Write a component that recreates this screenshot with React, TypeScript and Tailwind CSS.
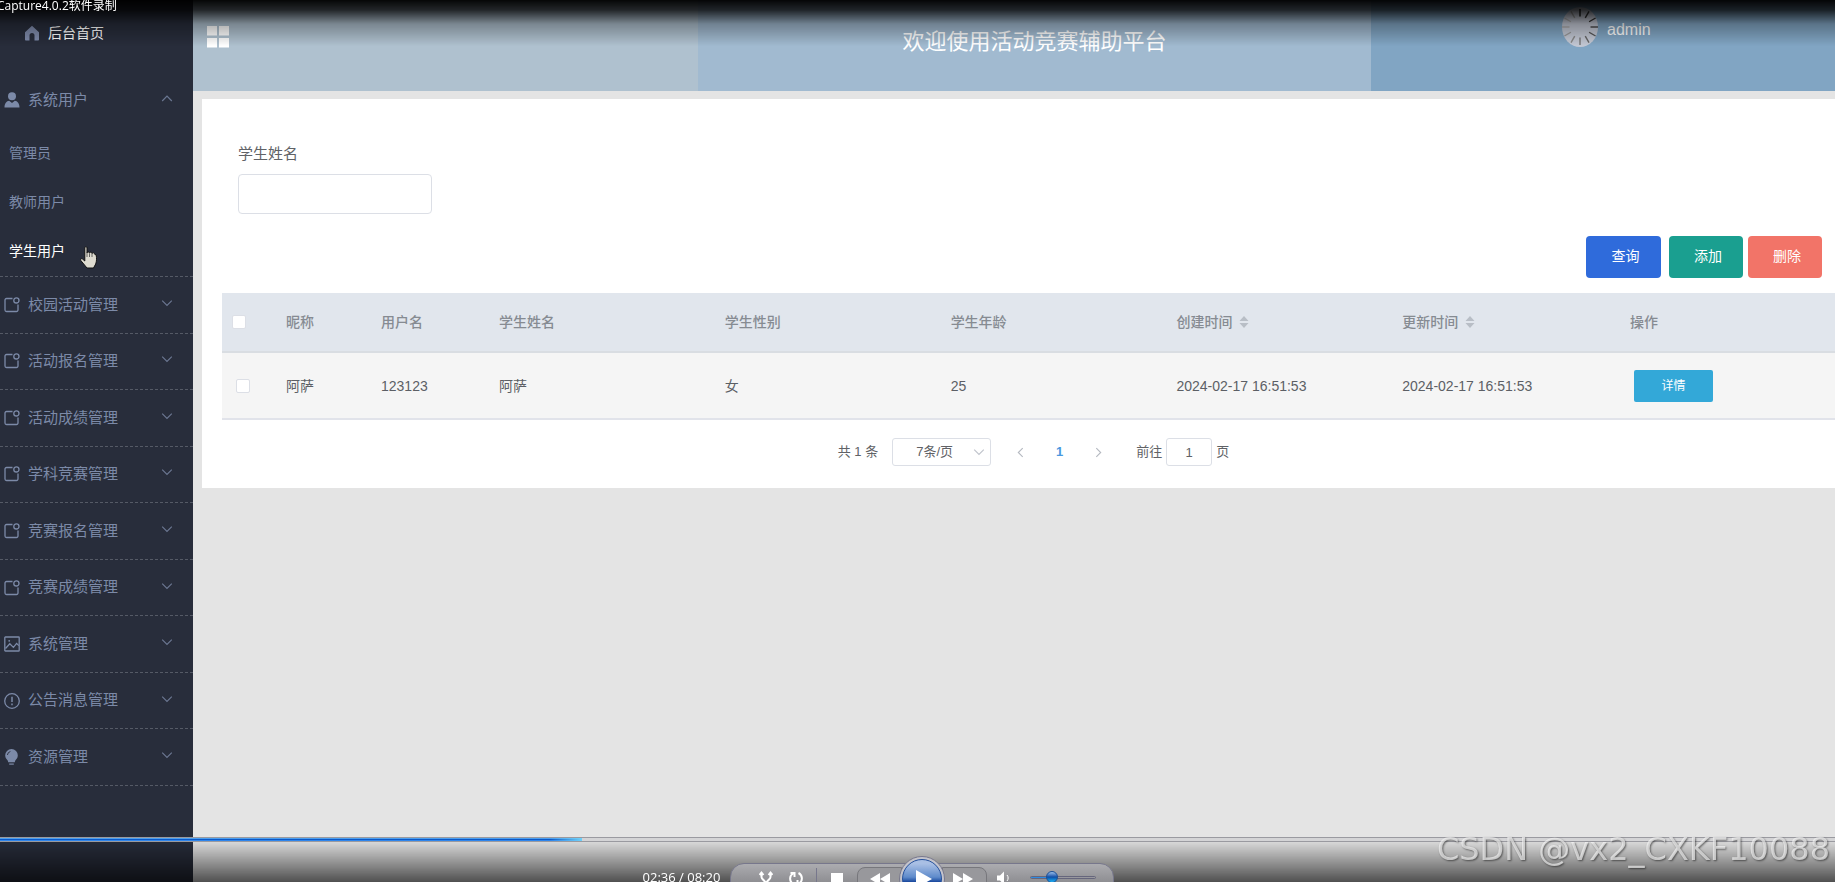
import React from 'react';

const menus = [
  { label: '校园活动管理', icon: 'tip' },
  { label: '活动报名管理', icon: 'tip' },
  { label: '活动成绩管理', icon: 'tip' },
  { label: '学科竞赛管理', icon: 'tip' },
  { label: '竞赛报名管理', icon: 'tip' },
  { label: '竞赛成绩管理', icon: 'tip' },
  { label: '系统管理', icon: 'picture' },
  { label: '公告消息管理', icon: 'warning' },
  { label: '资源管理', icon: 'bulb' },
];

const rows = [
  {
    nickname: '阿萨',
    username: '123123',
    name: '阿萨',
    gender: '女',
    age: '25',
    created: '2024-02-17 16:51:53',
    updated: '2024-02-17 16:51:53',
  },
];

function MenuIcon({ name }: { name: string }) {
  return (
    <svg className="h-4 w-4 shrink-0" viewBox="0 0 16 16" fill="none" stroke="currentColor" strokeWidth="1.3">
      {name === 'tip' && (
        <>
          <path d="M8.500 1.500H2.500A1.500 1.500 0 0 0 1 3v10a1.500 1.500 0 0 0 1.500 1.500h10A1.500 1.500 0 0 0 14 13V7.500" />
          <circle cx="12.400" cy="3.400" r="2.600" />
        </>
      )}
      {name === 'picture' && (
        <>
          <rect x="0.8" y="1" width="14.400" height="14" rx="0.6" />
          <path d="M1.500 12.500L5.800 7.800l3.600 3.600 3.200-4 2.200 2.200" />
          <circle cx="5.200" cy="4.800" r="0.900" fill="currentColor" stroke="none" />
        </>
      )}
      {name === 'warning' && (
        <>
          <circle cx="8" cy="8" r="7.300" />
          <path d="M8 3.800v5.200M8 10.500v1.700" strokeWidth="1.500" />
        </>
      )}
      {name === 'bulb' && (
        <g fill="currentColor" stroke="none">
          <path d="M7.500 0a6.300 6.300 0 0 1 6.300 6.500c0 2.600-1.600 3.700-2.500 5-.4.700-.4 1.300-.4 1.800H4.100c0-.5 0-1.100-.4-1.800-.9-1.300-2.500-2.400-2.500-5A6.300 6.300 0 0 1 7.500 0z" />
          <path d="M5.200 14.500h4.600v1.200H5.200z" />
          <path d="M3.400 6a4 4 0 0 1 3-3.500" fill="none" stroke="#282d3b" strokeWidth="0.900" />
        </g>
      )}
      {name === 'user' && (
        <g fill="currentColor" stroke="none">
          <circle cx="8" cy="4.300" r="4" />
          <path d="M.5 15.500c0-4 2-6.500 4.700-6.700L8 11l2.800-2.200c2.700.2 4.700 2.700 4.700 6.700z" />
        </g>
      )}
      {name === 'home' && (
        <path d="M8 .8L1 7.200v7.500c0 .5.300.8.800.8h3.700v-5a2.500 2.500 0 0 1 5 0v5h3.700c.5 0 .8-.3.800-.8V7.200z" fill="currentColor" stroke="none" />
      )}
    </svg>
  );
}

function Chevron({ d, className }: { d: string; className: string }) {
  return (
    <svg className={className} viewBox="0 0 10 10" fill="none" stroke="currentColor">
      <path d={d} />
    </svg>
  );
}

function Sidebar() {
  return (
    <nav className="w-[193px] shrink-0 bg-[#282d3b] text-[15px] text-[#7c8aa8]">
      <a href="#home" className="mt-[5px] flex h-14 items-center gap-2 pl-6 text-sm text-white">
        <span className="text-[#7f8bab]">
          <MenuIcon name="home" />
        </span>
        后台首页
      </a>
      <button className="mt-[11px] flex h-14 w-full items-center gap-2 pr-5 pl-1">
        <MenuIcon name="user" />
        <span>系统用户</span>
        <Chevron className="mb-1 ml-auto h-3 w-3 opacity-80" d="M1 7.500l4-4 4 4" />
      </button>
      <ul className="border-b border-dashed border-[#555a66] pb-px text-sm">
        <li>
          <a href="#admins" className="flex h-[49px] items-center pl-[9px]">管理员</a>
        </li>
        <li>
          <a href="#teachers" className="flex h-[49px] items-center pl-[9px]">教师用户</a>
        </li>
        <li>
          <a href="#students" className="relative flex h-[49px] items-center pl-[9px] text-white">
            学生用户
            <svg className="absolute top-5 left-20 h-[23px] w-[17px]" viewBox="0 0 17 23">
              <path
                d="M4.800 1.800c0-1.500 2.200-1.500 2.200 0V7c0-1.400 2.500-1.400 2.500.2 0-1.400 2.600-1.400 2.600.4 0-1.300 2.500-1.200 2.500.6l1.600.8c.5 3.500.5 6-.5 9L13.500 22H7L4.500 19 .8 14.500c-.8-1.400.6-2.400 1.800-1.400L4.800 15z"
                fill="#dedbd0"
                stroke="#111"
              />
              <path d="M7 7v4M9.500 7.500v3.500M12 8v3" stroke="#444" strokeWidth="0.800" />
            </svg>
          </a>
        </li>
      </ul>
      <ul className="grid h-[509px] auto-rows-fr">
        {menus.map((m) => (
          <li key={m.label} className="border-b border-dashed border-[#555a66]">
            <button className="flex h-full w-full items-center gap-2 pr-5 pl-1">
              <MenuIcon name={m.icon} />
              <span>{m.label}</span>
              <Chevron className="mb-1 ml-auto h-3 w-3 opacity-80" d="M1 3l4 4 4-4" />
            </button>
          </li>
        ))}
      </ul>
    </nav>
  );
}

const spokes = ['#1a1a1a', '#333', '#333', '#444', '#555', '#666', '#777', '#888', '#999', '#aaa', '#aaa', '#999'];

function Header() {
  return (
    <header className="grid h-[91px] grid-cols-[505fr_673fr_464fr]">
      <div className="bg-[#afc1cf] pt-[26px] pl-[14px]">
        <button className="block" aria-label="折叠菜单">
          <svg className="h-[22px] w-[22px]" viewBox="0 0 22 22" fill="#fff">
            <path d="M0 0h10v9.500H0zM12 0h10v9.500H12zM0 12h10v9.500H0zM12 12h10v9.500H12z" />
          </svg>
        </button>
      </div>
      <div className="flex items-center justify-center bg-[#a1bad0] pb-[9px]">
        <h1 className="text-[22px] text-white">欢迎使用活动竞赛辅助平台</h1>
      </div>
      <div className="bg-[#81a5c3] pt-[7px] pl-[191px]">
        <div className="flex h-10 items-center gap-[9px]">
          <svg className="h-10 w-9" viewBox="0 0 36 40">
            <ellipse cx="18" cy="20" rx="18" ry="20" fill="#c3c8d4" />
            {spokes.map((c, i) => (
              <path key={i} d="M18 9.500V2" stroke={c} strokeWidth="1.400" transform={`rotate(${i * 30} 18 20)`} />
            ))}
          </svg>
          <span className="pt-[6px] text-base text-white">admin</span>
        </div>
      </div>
    </header>
  );
}

function SortIcon() {
  return (
    <svg className="h-3 w-[10px]" viewBox="0 0 10 12" fill="#b8bec6">
      <path d="M5 0l4.500 5h-9zM5 12L.5 7h9z" />
    </svg>
  );
}

function StudentTable() {
  return (
    <table className="w-full table-fixed border-collapse text-left text-sm">
      <colgroup>
        <col className="w-[54px]" />
        <col className="w-[95px]" />
        <col className="w-[118px]" />
        <col className="w-[14%]" />
        <col className="w-[14%]" />
        <col className="w-[14%]" />
        <col className="w-[14%]" />
        <col className="w-[14%]" />
        <col />
      </colgroup>
      <thead>
        <tr className="h-[59px] border-b-2 border-[#d9dde2] bg-[#e1e6ed] text-[#868b92]">
          <th className="pl-[10px]">
            <input type="checkbox" aria-label="全选" className="block h-[14px] w-[14px] appearance-none rounded-xs border border-[#dcdfe6] bg-white" />
          </th>
          <th className="pl-[10px] font-medium">昵称</th>
          <th className="pl-[10px] font-medium">用户名</th>
          <th className="pl-[10px] font-medium">学生姓名</th>
          <th className="pl-[10px] font-medium">学生性别</th>
          <th className="pl-[10px] font-medium">学生年龄</th>
          <th className="pl-[10px] font-medium">
            <button className="flex items-center gap-[7px]">创建时间<SortIcon /></button>
          </th>
          <th className="pl-[10px] font-medium">
            <button className="flex items-center gap-[7px]">更新时间<SortIcon /></button>
          </th>
          <th className="pl-3 font-medium">操作</th>
        </tr>
      </thead>
      <tbody>
        {rows.map((r) => (
          <tr key={r.username} className="h-[67px] border-b-2 border-[#e1e3ea] bg-[#f5f5f5] text-[#5c5f65]">
            <td className="pl-[14px]">
              <input type="checkbox" aria-label={`选择 ${r.nickname}`} className="block h-[14px] w-[14px] appearance-none rounded-xs border border-[#dcdfe6] bg-white" />
            </td>
            <td className="pl-[10px]">{r.nickname}</td>
            <td className="pl-[10px]">{r.username}</td>
            <td className="pl-[10px]">{r.name}</td>
            <td className="pl-[10px]">{r.gender}</td>
            <td className="pl-[10px]">{r.age}</td>
            <td className="pl-[10px]">{r.created}</td>
            <td className="pl-[10px]">{r.updated}</td>
            <td className="pl-4">
              <button className="block h-8 w-[79px] rounded-xs bg-[#33a8d8] text-xs text-white">详情</button>
            </td>
          </tr>
        ))}
      </tbody>
    </table>
  );
}

function Pagination() {
  return (
    <div className="flex h-[64px] items-center justify-center pl-[10px] text-[13px] text-[#606266]">
      <span>共 1 条</span>
      <div className="relative ml-[14px]">
        <select aria-label="每页条数" className="block h-7 w-[99px] appearance-none rounded-[3px] border border-[#dcdfe6] bg-white pl-[23px]">
          <option>7条/页</option>
        </select>
        <Chevron className="pointer-events-none absolute top-2 right-[6px] h-3 w-3 text-[#c0c4cc]" d="M1 3l4 4 4-4" />
      </div>
      <button aria-label="上一页" className="ml-6 text-[#b4b8c0]">
        <Chevron className="h-[11px] w-[11px]" d="M7 1L3 5l4 4" />
      </button>
      <button className="mx-7 w-[11px] font-bold text-[#4a98e0]">1</button>
      <button aria-label="下一页" className="text-[#b4b8c0]">
        <Chevron className="h-[11px] w-[11px]" d="M3 1l4 4-4 4" />
      </button>
      <label className="ml-8 flex items-center gap-1">
        前往
        <input defaultValue="1" className="h-7 w-[46px] rounded-[3px] border border-[#dcdfe6] text-center" />
        页
      </label>
    </div>
  );
}

function Player() {
  return (
    <div className="fixed inset-x-0 bottom-0 h-[45px] overflow-hidden">
      <div className="h-[5px] border-y border-[#9a9aa0] bg-[#d4d4d6]">
        <div className="h-[3px] w-[31.7%] bg-linear-to-b from-[#6cc0ff] via-[#0a58c8] to-[#3f9cff]">
          <div className="ml-auto h-[3px] w-8 bg-linear-to-r from-transparent to-[#6fd0f8]"></div>
        </div>
      </div>
      <div className="flex h-10 justify-center bg-linear-to-b from-black/5 to-black/65 pr-[78px] text-white">
        <div className="mr-[10px] pt-[25px] text-[13px] leading-5 font-['Open_Sans',sans-serif]">02:36 / 08:20</div>
        <div className="mt-[21px] flex h-8 w-[384px] rounded-t-[14px] border border-[#77778c] bg-linear-to-b from-[#acacb0] to-[#7b7b7f]">
          <button aria-label="随机" className="ml-7 h-7 w-[14px]">
            <svg className="h-4 w-[14px]" viewBox="0 0 14 16" fill="none" stroke="#fff" strokeWidth="2">
              <path d="M2.500 3v4c0 3 4.500 3 4.500 8M11.500 3v4c0 3-4.500 3-4.500 8M.5 5l2-2.500 2 2.500M9.500 5l2-2.500 2 2.500" />
            </svg>
          </button>
          <button aria-label="循环" className="ml-4 h-7 w-[14px]">
            <svg className="h-4 w-[14px]" viewBox="0 0 14 16" fill="none" stroke="#fff" strokeWidth="2">
              <path d="M4.500 14A6 6 0 0 1 4 3.500M9.500 3A6 6 0 0 1 10 13.500M1.500 3h4v4M12.500 14h-4v-4" />
            </svg>
          </button>
          <div className="mt-1 ml-[13px] h-7 w-px bg-[#77778c]"></div>
          <button aria-label="停止" className="mt-[9px] ml-[14px] h-3 w-3 bg-white"></button>
          <button aria-label="快退" className="mt-[3px] ml-[14px] h-8 w-[45px] rounded-tl-lg border border-[#77777c] bg-[#98989c]">
            <svg className="mb-2 ml-3 h-3 w-5" viewBox="0 0 20 12" fill="#fff">
              <path d="M0 6L10 0v12zM10 6l10-6v12z" />
            </svg>
          </button>
          <div className="relative w-10">
            <button
              aria-label="播放"
              className="absolute -top-2 -left-[3px] flex h-[46px] w-[46px] items-center justify-center rounded-full border border-[#77778c] bg-[#c4c4cc]"
            >
              <span className="flex h-10 w-10 items-center justify-center rounded-full border border-[#24509c] bg-linear-to-b from-[#a9bfe4] from-10% via-[#5f8bcb] via-45% to-[#0a3a94] to-60%">
                <svg className="ml-1 h-[18px] w-4" viewBox="0 0 16 18" fill="#fff">
                  <path d="M0 0l16 9L0 18z" />
                </svg>
              </span>
            </button>
          </div>
          <button aria-label="快进" className="mt-[3px] h-8 w-[45px] rounded-tr-lg border border-[#77777c] bg-[#98989c]">
            <svg className="mb-2 ml-[10px] h-3 w-5" viewBox="0 0 20 12" fill="#fff">
              <path d="M0 0l10 6-10 6zM10 0l10 6-10 6z" />
            </svg>
          </button>
          <button aria-label="静音" className="ml-[10px] h-7 w-[13px]">
            <svg className="h-[14px] w-[13px]" viewBox="0 0 13 14" fill="#fff">
              <path d="M0 4.500h3L7 .5v13L3 9.500H0z" />
              <path d="M10 4c1.500 1.500 1.500 4.500 0 6" fill="none" stroke="#fff" />
            </svg>
          </button>
          <div className="relative mt-3 ml-5 h-[3px] w-[66px] rounded-full border border-[#66667c] bg-[#98989e]">
            <div className="h-px w-4 bg-[#2f8be0]"></div>
            <div className="absolute -top-[6px] left-[15px] h-3 w-3 rounded-full border border-[#1a4f96] bg-linear-to-b from-[#9cc0ea] via-[#0e4ea6] to-[#22b4f8]"></div>
          </div>
        </div>
      </div>
    </div>
  );
}

export default function App() {
  return (
    <div className="flex min-h-screen bg-[#e4e4e4] font-['Liberation_Sans','Noto_Sans_CJK_SC',sans-serif]">
      <Sidebar />
      <div className="min-w-0 flex-1">
        <Header />
        <main className="mt-2 ml-[9px] bg-white pt-[43px] pb-1">
          <form className="pl-9">
            <label htmlFor="student-name" className="block text-[15px] leading-6 text-[#606266]">学生姓名</label>
            <input id="student-name" className="mt-2 block h-10 w-[194px] rounded-sm border border-[#dcdfe6] px-3 text-sm" />
          </form>
          <div className="mt-[22px] flex justify-end pr-[13px] text-sm text-white">
            <button className="mr-2 h-[42px] w-[75px] rounded-sm bg-[#2f6bdb] pb-0.5 pl-1">查询</button>
            <button className="mr-[5px] h-[42px] w-[74px] rounded-sm bg-[#1a9f90] pb-0.5 pl-1">添加</button>
            <button className="h-[42px] w-[74px] rounded-sm bg-[#f27468] pb-0.5 pl-1">删除</button>
          </div>
          <div className="mt-[15px] ml-5">
            <StudentTable />
            <Pagination />
          </div>
        </main>
      </div>
      <div className="pointer-events-none fixed inset-x-0 top-0 h-[46px] bg-[linear-gradient(to_bottom,rgba(0,0,0,0.97),rgba(0,0,0,0.8)_22%,rgba(0,0,0,0.3)_52%,transparent)]">
        <p className="-ml-[3px] text-xs leading-3 whitespace-nowrap text-white font-['Open_Sans','Noto_Sans_CJK_SC',sans-serif]">Capture4.0.2软件录制</p>
      </div>
      <Player />
      <p className="pointer-events-none fixed right-[5px] bottom-[13px] text-[32px] leading-10 whitespace-nowrap text-white/65 font-['DejaVu_Sans',sans-serif] [text-shadow:1px_1px_2px_rgba(0,0,0,0.5)]">
        CSDN @vx2_CXKF10088
      </p>
    </div>
  );
}
